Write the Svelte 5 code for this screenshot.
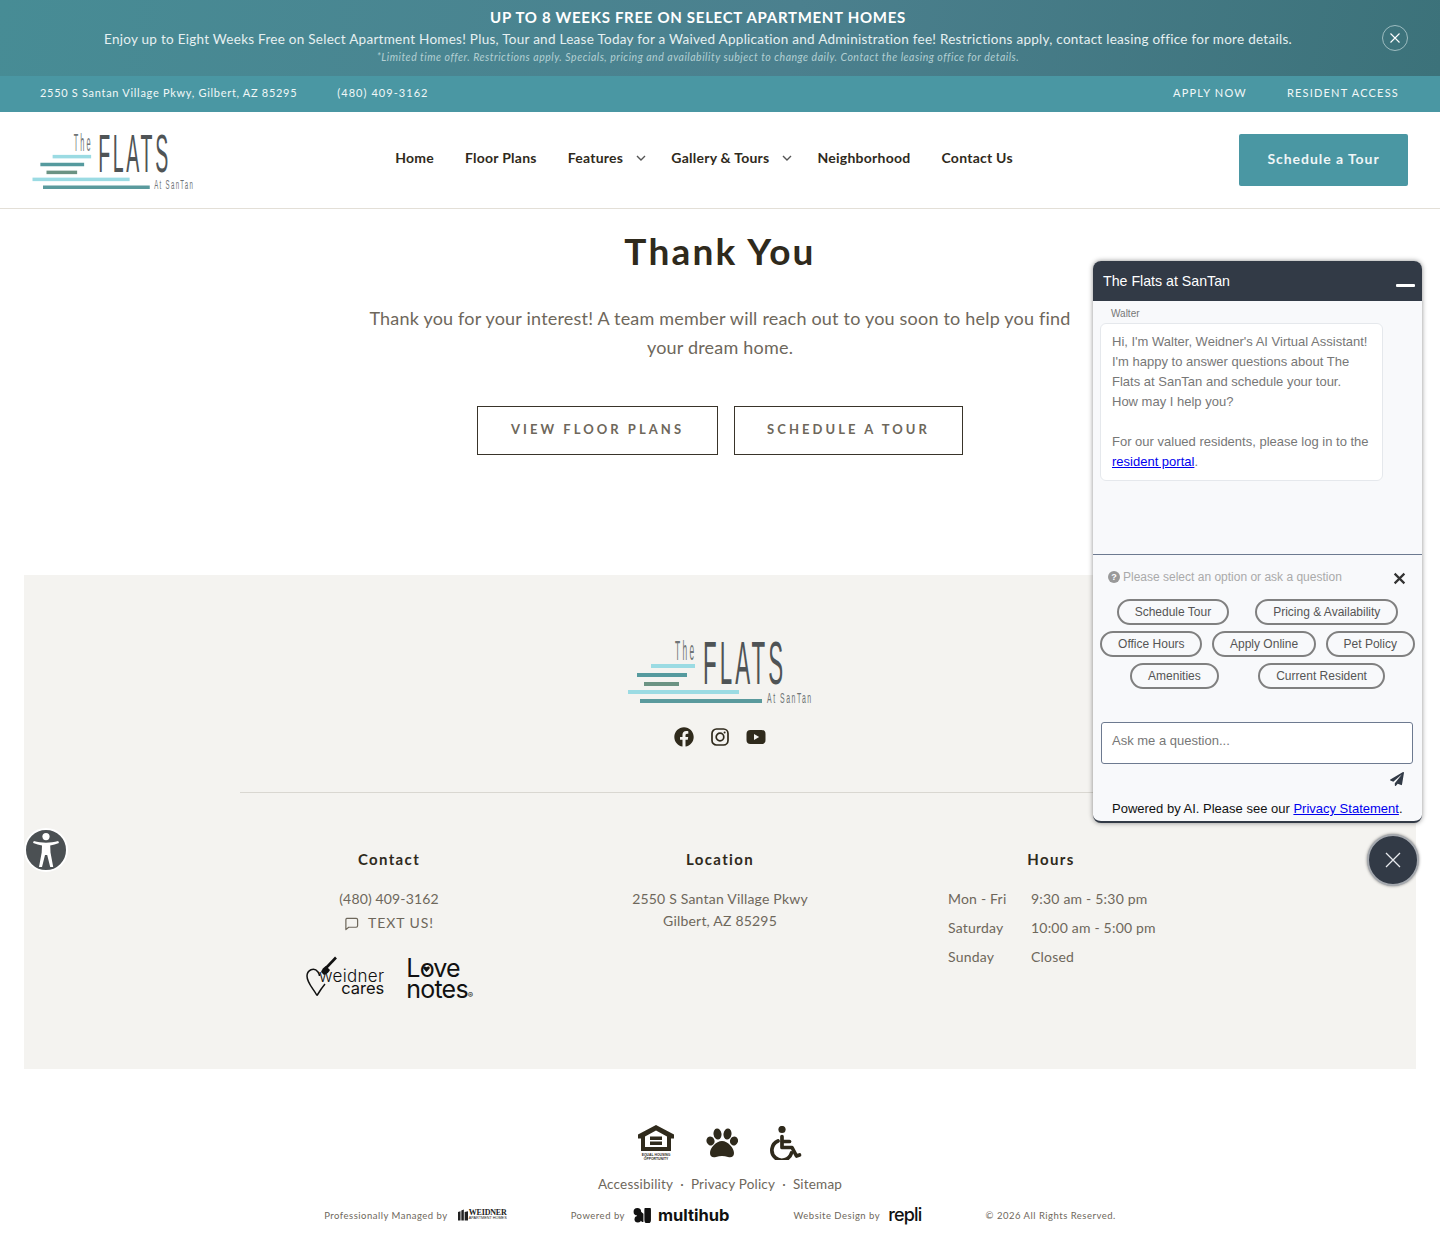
<script>
	const nav = [
		{ label: 'Home' },
		{ label: 'Floor Plans' },
		{ label: 'Features', more: true },
		{ label: 'Gallery & Tours', more: true },
		{ label: 'Neighborhood' },
		{ label: 'Contact Us' }
	];
	const hours = [
		['Mon - Fri', '9:30 am - 5:30 pm'],
		['Saturday', '10:00 am - 5:00 pm'],
		['Sunday', 'Closed']
	];
	const chips = ['Schedule Tour', 'Pricing & Availability', 'Office Hours', 'Apply Online', 'Pet Policy', 'Amenities', 'Current Resident'];
</script>

{#snippet logo(cls)}
	<svg class={cls} viewBox="0 0 184 64" aria-label="The Flats at SanTan">
		<rect x="23" y="25" width="44" height="4" fill="#9bdbe3" />
		<rect x="9" y="34" width="50" height="4" fill="#559a9e" />
		<rect x="16" y="43" width="35" height="4" fill="#6b9383" />
		<rect x="0" y="51" width="111" height="4" fill="#9bdbe3" />
		<rect x="12" y="60" width="122" height="4" fill="#5a9a9d" />
		<g font-family="Liberation Sans" fill="#4f5456">
			<text transform="translate(47 21) scale(.3 1)" font-size="28" letter-spacing="8" fill="#6f7476">The</text>
			<text transform="translate(75 45) scale(.36 1)" font-size="62" letter-spacing="8.500">FLATS</text>
			<text transform="translate(139 64) scale(.45 1)" font-size="15.400" letter-spacing="3.400" fill="#6f7476">At SanTan</text>
		</g>
	</svg>
{/snippet}

<div class="page">
	<section class="promo">
		<h2>UP TO 8 WEEKS FREE ON SELECT APARTMENT HOMES</h2>
		<p class="promo-body">Enjoy up to Eight Weeks Free on Select Apartment Homes! Plus, Tour and Lease Today for a Waived Application and Administration fee! Restrictions apply, contact leasing office for more details.</p>
		<p class="promo-fine">*Limited time offer. Restrictions apply. Specials, pricing and availability subject to change daily. Contact the leasing office for details.</p>
		<button class="promo-close" aria-label="Close">
			<svg viewBox="0 0 12 12" width="12" height="12"><path d="M1.500 1.500l9 9M10.500 1.500l-9 9" stroke="#fff" stroke-width="1.100" fill="none" /></svg>
		</button>
	</section>

	<div class="topbar">
		<div class="topbar-left">
			<span class="addr">2550 S Santan Village Pkwy, Gilbert, AZ 85295</span>
			<span class="tel">(480) 409-3162</span>
		</div>
		<div class="topbar-right">
			<span>APPLY NOW</span>
			<span>RESIDENT ACCESS</span>
		</div>
	</div>

	<header>
		{@render logo('logo-head')}
		<nav>
			{#each nav as item}
				<span class="nav-item" class:more={item.more}>
					{item.label}
					{#if item.more}
						<svg viewBox="0 0 10 6" width="10" height="6"><path d="M1 1l4 4 4-4" stroke="#555" stroke-width="1.400" fill="none" /></svg>
					{/if}
				</span>
			{/each}
		</nav>
		<button class="cta">Schedule a Tour</button>
	</header>

	<main>
		<h1>Thank You</h1>
		<p class="lead">Thank you for your interest! A team member will reach out to you soon to help you find your dream home.</p>
		<div class="actions">
			<button class="ghost wide">VIEW FLOOR PLANS</button>
			<button class="ghost">SCHEDULE A TOUR</button>
		</div>
	</main>

	<footer>
		<div class="foot-top">
			{@render logo('logo-foot')}
			<div class="social">
				<svg viewBox="0 0 512 512" width="20" height="20"><path fill="#2f2a1c" d="M504 256C504 119 393 8 256 8S8 119 8 256c0 123.78 90.69 226.38 209.25 245V327.69h-63V256h63v-54.64c0-62.15 37-96.48 93.67-96.48 27.14 0 55.52 4.84 55.52 4.84v61h-31.28c-30.8 0-40.41 19.12-40.41 38.73V256h68.78l-11 71.69h-57.78V501C413.31 482.38 504 379.78 504 256z" /></svg>
				<svg viewBox="0 0 20 20" width="20" height="20" fill="none" stroke="#2f2a1c" stroke-width="1.700"><rect x="2" y="2" width="16" height="16" rx="4.500" /><circle cx="10" cy="10" r="3.800" /><circle cx="14.600" cy="5.400" r="1" fill="#2f2a1c" stroke="none" /></svg>
				<svg viewBox="0 0 20 20" width="20" height="20"><rect x="0.500" y="3" width="19" height="14" rx="4" fill="#2f2a1c" /><path d="M8 7l5.200 3L8 13z" fill="#f4f3f0" /></svg>
			</div>
		</div>
		<div class="foot-cols">
			<div class="col">
				<h3>Contact</h3>
				<p class="phone">(480) 409-3162</p>
				<p class="text-us">
					<svg viewBox="0 0 16 16" width="15" height="15" fill="none" stroke="#6e675b" stroke-width="1.300"><path d="M3 2.500h10a1.500 1.500 0 0 1 1.500 1.500v6.500A1.500 1.500 0 0 1 13 12H5l-3 2.500V4A1.500 1.500 0 0 1 3 2.500z" stroke-linejoin="round" /></svg>
					<span>TEXT US!</span>
				</p>
				<div class="partners">
					<div class="cares">
						<svg viewBox="0 0 32 40" width="32" height="40" fill="none" stroke="#111" stroke-width="1.500">
							<path d="M11 39.500C7 32 1 27 1 20c0-6 7-9.500 11-4 1 1.500 1.500 3 1.500 4" />
							<path d="M11 39.500c3-5 5-8 8-11.500" />
							<path d="M20 12L30 1.500" stroke-width="2.600" />
							<path d="M15 16c1-3 3-5 5-6l4 4c-1 2-3 4-6 5z" fill="#111" stroke="none" />
						</svg>
						<span class="cares-text"><span>weidner</span><span class="cares-b">cares</span></span>
					</div>
					<div class="love">
						<span class="love-top">Love<svg viewBox="0 0 10 9" width="7" height="6"><path d="M5 9L.6 4.300C-1 2 1.500-.8 5 2c3.500-2.800 6 0 4.400 2.300z" fill="#111" /></svg></span>
						<span>notes<i>®</i></span>
					</div>
				</div>
			</div>
			<div class="col">
				<h3>Location</h3>
				<p class="loc">2550 S Santan Village Pkwy<br />Gilbert, AZ 85295</p>
			</div>
			<div class="col">
				<h3>Hours</h3>
				<div class="hours">
					{#each hours as row}
						<span>{row[0]}</span><span>{row[1]}</span>
					{/each}
				</div>
			</div>
		</div>
	</footer>

	<section class="legal">
		<div class="legal-icons">
			<svg viewBox="0 0 36 36" width="36" height="36">
				<path fill="#2f2a1c" fill-rule="evenodd" d="M18 0L0 9.500v4h3V26h30V13.500h3v-4zM7 11.500l11-6 11 6V22H7z" />
				<rect x="12" y="11.500" width="12" height="3.500" fill="#2f2a1c" />
				<rect x="12" y="16.500" width="12" height="3.500" fill="#2f2a1c" />
				<text x="18" y="30.500" class="eho">EQUAL HOUSING</text>
				<text x="18" y="34.500" class="eho">OPPORTUNITY</text>
			</svg>
			<svg viewBox="0 0 32 30" width="32" height="30" fill="#2f2a1c">
				<ellipse cx="4.500" cy="13" rx="4" ry="4.500" transform="rotate(-20 4.500 13)" />
				<ellipse cx="11.500" cy="6" rx="4" ry="5.500" transform="rotate(-8 11.500 6)" />
				<ellipse cx="21.500" cy="6" rx="4" ry="5.500" transform="rotate(8 21.500 6)" />
				<ellipse cx="28" cy="13" rx="4" ry="4.500" transform="rotate(20 28 13)" />
				<path d="M16 13c6 0 12 7 12 12 0 4-3 5-6 4-2-.6-4-1-6-1s-4 .4-6 1c-3 1-6 0-6-4 0-5 6-12 12-12z" />
			</svg>
			<svg viewBox="0 0 32 34" width="32" height="34" fill="none" stroke="#2f2a1c" stroke-width="3.700" stroke-linecap="round" stroke-linejoin="round">
				<circle cx="12" cy="3.500" r="3.600" fill="#2f2a1c" stroke="none" />
				<path d="M12 10.500v11h10l4.500 8.500 3-1" />
				<path d="M12.500 15.500h7" />
				<path d="M8 15a10 10 0 1 0 13.500 12" />
			</svg>
		</div>
		<div class="legal-links">
			<span>Accessibility</span><i>·</i><span>Privacy Policy</span><i>·</i><span>Sitemap</span>
		</div>
		<div class="credits">
			<div class="credit">
				<span>Professionally Managed by</span>
				<span class="weidner">
					<svg viewBox="0 0 12 13" width="10" height="12" fill="#222"><path d="M0 3l3-1v11H0zM4 1l3-1v13H4zM8 3l4-1v11H8z" /></svg>
					<span class="weidner-text"><b>WEIDNER</b><small>APARTMENT HOMES</small></span>
				</span>
			</div>
			<div class="credit">
				<span>Powered by</span>
				<span class="multihub">
					<svg viewBox="0 0 20 16" width="19" height="15" fill="#111"><circle cx="4.500" cy="4" r="4" /><circle cx="5" cy="12" r="3.500" /><path d="M5 1l6 5v9h-1.500L4 9zM12 2a3 3 0 0 1 7 0v11a3 3 0 0 1-7 0z" /></svg>
					<b>multihub</b>
				</span>
			</div>
			<div class="credit">
				<span>Website Design by</span>
				<span class="repli">repli</span>
			</div>
			<div class="credit"><span>© 2026 All Rights Reserved.</span></div>
		</div>
	</section>

	<aside class="chat">
		<div class="chat-head">
			<span>The Flats at SanTan</span>
			<i class="minimize"></i>
		</div>
		<div class="chat-log">
			<div class="chat-name">Walter</div>
			<div class="bubble">
				Hi, I'm Walter, Weidner's AI Virtual Assistant! I'm happy to answer questions about The Flats at SanTan and schedule your tour.<br />How may I help you?<br /><br />
				For our valued residents, please log in to the <a href="#portal">resident portal</a>.
			</div>
		</div>
		<div class="chat-options">
			<div class="hint">
				<span class="q">?</span>
				<span>Please select an option or ask a question</span>
				<svg viewBox="0 0 12 12" width="13" height="13"><path d="M1.500 1.500l9 9M10.500 1.500l-9 9" stroke="#333" stroke-width="2" fill="none" /></svg>
			</div>
			<div class="chips">
				{#each chips as chip}
					<span class="chip">{chip}</span>
				{/each}
			</div>
		</div>
		<div class="chat-input">Ask me a question...</div>
		<div class="chat-send">
			<svg viewBox="0 0 512 512" width="14" height="14"><path fill="#323a46" d="M476 3.200L12.500 270.600c-18.100 10.400-15.800 35.600 2.200 43.200L121 358.400l287.300-253.200c5.500-4.900 13.300 2.600 8.600 8.300L176 407v80.500c0 23.600 28.500 32.900 42.500 15.800L282 426l124.600 52.200c14.200 6 30.400-2.900 33-18.200l72-432C515 7.800 493.300-6.800 476 3.200z" /></svg>
		</div>
		<div class="chat-foot">Powered by AI. Please see our <a href="#privacy">Privacy Statement</a>.</div>
	</aside>

	<button class="chat-toggle" aria-label="Close chat">
		<svg viewBox="0 0 16 16" width="16" height="16"><path d="M1 1l14 14M15 1L1 15" stroke="#e8eaee" stroke-width="1.300" fill="none" /></svg>
	</button>

	<button class="a11y" aria-label="Accessibility">
		<svg viewBox="0 0 26 34" width="26" height="34" fill="#fff">
			<circle cx="13" cy="3.600" r="3.600" />
			<path d="M0 10l.8-2c4 1.200 8 1.700 12.200 1.700s8.200-.5 12.200-1.700l.8 2c-3 1.200-6 2-8.800 2.400l.3 7 2.700 14.600h-3l-3-12h-2.200l-3 12h-3l2.700-14.600.3-7c-2.800-.4-5.800-1.200-8.800-2.400z" />
		</svg>
	</button>
</div>

<style>
	:global(body) {
		font-family: Lato, "Liberation Sans", sans-serif;
		color: #6e675b;
	}
	.page {
		position: relative;
		height: 1247px;
		overflow: hidden;
		background: #fff;
	}
	button {
		font-family: inherit;
		cursor: pointer;
	}
	p, h1, h2, h3 {
		margin: 0;
	}

	.promo {
		position: relative;
		height: 76px;
		box-sizing: border-box;
		padding: 8px 44px 0 0;
		text-align: center;
		color: #fff;
		background: linear-gradient(100deg, #478c95 0%, #4b808e 55%, #3c727a 100%);
	}
	.promo h2 {
		font-size: 15px;
		line-height: 18px;
		font-weight: 700;
		letter-spacing: 0.7px;
	}
	.promo-body {
		margin-top: 4px;
		font-size: 13.500px;
		line-height: 18px;
		letter-spacing: 0.27px;
		color: #e6f0f1;
	}
	.promo-fine {
		font-size: 10.500px;
		line-height: 14px;
		margin-top: 2px;
		font-style: italic;
		letter-spacing: 0.52px;
		color: #b4d0d3;
	}
	.promo-close {
		position: absolute;
		right: 32px;
		top: 25px;
		width: 26px;
		height: 26px;
		border-radius: 50%;
		border: 1px solid #9dbcc0;
		background: none;
		padding: 0;
		display: flex;
		align-items: center;
		justify-content: center;
	}

	.topbar {
		height: 36px;
		box-sizing: border-box;
		background: #4a97a3;
		display: flex;
		align-items: center;
		justify-content: space-between;
		padding: 0 41px 3px 40px;
		font-size: 11px;
		letter-spacing: 0.7px;
		color: #f1f7f8;
	}
	.topbar-left {
		display: flex;
		gap: 40px;
	}
	.tel {
		letter-spacing: 1.050px;
	}
	.topbar-right {
		display: flex;
		gap: 40px;
		letter-spacing: 1.200px;
	}

	header {
		height: 97px;
		box-sizing: border-box;
		border-bottom: 1px solid #e3dfd7;
		display: flex;
		align-items: center;
		justify-content: space-between;
		padding: 0 32px;
	}
	.logo-head {
		width: 162px;
		height: 56px;
		margin-top: 1px;
		overflow: visible;
	}
	.logo-foot {
		width: 184px;
		height: 64px;
		overflow: visible;
	}
	nav {
		display: flex;
		gap: 31px;
		margin: 0 25px 5px 0;
		font-size: 14px;
		font-weight: 700;
		letter-spacing: 0.25px;
		color: #2f2a1c;
	}
	.nav-item {
		display: flex;
		align-items: center;
		gap: 13px;
		white-space: nowrap;
	}
	.nav-item.more {
		margin-right: -6px;
	}
	.cta {
		width: 169px;
		height: 52px;
		border: 0;
		border-radius: 2px;
		padding-bottom: 4px;
		background: #4a97a3;
		color: #f0f6f7;
		font-size: 14px;
		font-weight: 700;
		letter-spacing: 0.950px;
	}

	main {
		height: 366px;
		box-sizing: border-box;
		padding-top: 20px;
		text-align: center;
	}
	h1 {
		font-size: 37px;
		line-height: 44px;
		font-weight: 700;
		letter-spacing: 2.200px;
		color: #2f2a1c;
	}
	.lead {
		width: 720px;
		margin: 31px auto 0;
		font-size: 18px;
		line-height: 29px;
		letter-spacing: 0.2px;
	}
	.actions {
		margin-top: 44px;
		display: flex;
		justify-content: center;
		gap: 16px;
	}
	.ghost {
		width: 229px;
		height: 49px;
		padding-bottom: 4px;
		background: #fff;
		border: 1px solid #39342a;
		font-size: 13px;
		letter-spacing: 3.050px;
		font-weight: 700;
		color: #6e675b;
	}
	.ghost.wide {
		width: 241px;
	}

	footer {
		margin: 0 24px;
		height: 494px;
		box-sizing: border-box;
		padding-top: 64px;
		background: #f4f3f0;
	}
	.foot-top {
		width: 960px;
		height: 154px;
		margin: 0 auto;
		box-sizing: border-box;
		border-bottom: 1px solid #d9d7d1;
		display: flex;
		flex-direction: column;
		align-items: center;
	}
	.social {
		display: flex;
		gap: 16px;
		margin-top: 24px;
	}
	.foot-cols {
		width: 960px;
		margin: 0 auto;
		padding-top: 57px;
		display: grid;
		grid-template-columns: repeat(3, 298px);
		column-gap: 33px;
		text-align: center;
		font-size: 14px;
		letter-spacing: 0.2px;
	}
	h3 {
		font-size: 15px;
		line-height: 18px;
		font-weight: 700;
		letter-spacing: 1.350px;
		color: #2f2a1c;
	}
	.phone {
		margin-top: 21px;
		line-height: 20px;
		letter-spacing: 0.15px;
	}
	.text-us {
		margin-top: 4px;
		display: flex;
		align-items: center;
		justify-content: center;
		gap: 9px;
		line-height: 20px;
		letter-spacing: 0.950px;
	}
	.loc {
		margin-top: 20px;
		line-height: 22px;
	}
	.partners {
		margin-top: 23px;
		display: flex;
		justify-content: center;
		align-items: flex-start;
		gap: 22px;
		color: #111;
		font-family: Inter, sans-serif;
		letter-spacing: 0;
	}
	.cares {
		display: flex;
		align-items: flex-start;
	}
	.cares-text {
		display: flex;
		flex-direction: column;
		align-items: flex-end;
		margin-left: -19px;
		margin-top: 14px;
		font-size: 17px;
		line-height: 12px;
		font-weight: 300;
		letter-spacing: 0.3px;
	}
	.cares-b {
		font-size: 16.500px;
		font-weight: 400;
		letter-spacing: 0;
	}
	.love {
		display: flex;
		flex-direction: column;
		text-align: left;
		font-size: 25px;
		line-height: 21px;
		letter-spacing: -0.8px;
		padding-top: 2px;
	}
	.love-top {
		position: relative;
	}
	.love-top svg {
		position: absolute;
		left: 17px;
		top: 8px;
	}
	.love i {
		font-size: 8px;
		font-style: normal;
	}
	.hours {
		margin: 21px 0 0 46px;
		display: grid;
		grid-template-columns: 83px 1fr;
		row-gap: 9px;
		line-height: 20px;
		text-align: left;
	}

	.legal {
		padding-top: 56px;
		text-align: center;
	}
	.legal-icons {
		display: flex;
		justify-content: center;
		align-items: center;
		gap: 32px;
		height: 36px;
	}
	.eho {
		font-family: "Liberation Sans", sans-serif;
		font-size: 3.400px;
		font-weight: 700;
		text-anchor: middle;
		fill: #2f2a1c;
	}
	.legal-links {
		margin-top: 14px;
		display: flex;
		justify-content: center;
		gap: 7px;
		font-size: 13.500px;
		line-height: 18px;
		letter-spacing: 0.2px;
	}
	.legal-links i {
		font-style: normal;
	}
	.credits {
		margin-top: 11px;
		display: flex;
		justify-content: center;
		gap: 64px;
		font-size: 9.500px;
		letter-spacing: 0.5px;
	}
	.credit {
		display: flex;
		align-items: center;
		gap: 8px;
		height: 22px;
	}
	.weidner {
		display: flex;
		align-items: center;
		gap: 1px;
		margin-left: 2px;
		color: #222;
	}
	.weidner-text {
		display: flex;
		flex-direction: column;
		font-family: "Liberation Serif", serif;
		letter-spacing: 0;
		line-height: 7px;
	}
	.weidner-text b {
		font-size: 8px;
		letter-spacing: -0.2px;
	}
	.weidner-text small {
		font-family: "Liberation Sans", sans-serif;
		font-size: 3.800px;
		line-height: 5px;
	}
	.multihub {
		display: flex;
		align-items: center;
		gap: 6px;
		font-family: Inter, sans-serif;
		font-size: 16.500px;
		letter-spacing: 0;
		color: #111;
	}
	.repli {
		font-family: Inter, sans-serif;
		font-size: 18px;
		font-weight: 500;
		line-height: 20px;
		letter-spacing: -0.8px;
		color: #111;
	}

	.chat {
		position: absolute;
		left: 1093px;
		top: 261px;
		width: 329px;
		height: 562px;
		box-sizing: border-box;
		border-bottom: 2px solid #323a46;
		border-radius: 8px;
		background: #f8f9fb;
		box-shadow: 0 0 5px rgba(0, 0, 0, 0.45);
		font-family: "Liberation Sans", sans-serif;
		font-size: 13px;
		color: #777;
		overflow: hidden;
	}
	.chat-head {
		height: 40px;
		background: #323a46;
		color: #fff;
		font-size: 14.200px;
		line-height: 40px;
		padding-left: 10px;
		position: relative;
	}
	.minimize {
		position: absolute;
		right: 7px;
		top: 23px;
		width: 19px;
		height: 3px;
		background: #fff;
		border-radius: 1px;
	}
	.chat-log {
		height: 254px;
		box-sizing: border-box;
		border-bottom: 1px solid #6d7a90;
		padding: 7px 7px 0;
	}
	.chat-name {
		font-size: 10px;
		line-height: 12px;
		padding-left: 11px;
		margin-bottom: 3px;
	}
	.bubble {
		width: 283px;
		box-sizing: border-box;
		padding: 8px 11px;
		background: #fff;
		border: 1px solid #e5e8ec;
		border-radius: 6px;
		line-height: 20px;
	}
	.chat-options {
		height: 167px;
		box-sizing: border-box;
		padding-top: 15px;
	}
	.hint {
		display: flex;
		align-items: center;
		height: 14px;
		padding-left: 15px;
		font-size: 12px;
		color: #aaa;
		gap: 3px;
	}
	.hint svg {
		margin-left: auto;
		margin-right: 16px;
		margin-top: 2px;
	}
	.q {
		width: 12px;
		height: 12px;
		border-radius: 50%;
		background: #999;
		color: #fff;
		font-size: 9px;
		font-weight: 700;
		line-height: 12px;
		text-align: center;
	}
	.chips {
		margin-top: 15px;
		display: flex;
		flex-wrap: wrap;
		justify-content: space-evenly;
		row-gap: 8px;
	}
	.chip {
		margin: 0 2.500px -2px;
		box-sizing: border-box;
		height: 26px;
		padding: 0 15.900px;
		border: 2px solid #808080;
		border-radius: 13px;
		font-size: 12px;
		line-height: 22px;
		color: #555;
		white-space: nowrap;
	}
	.chat-input {
		margin: 0 9px 0 8px;
		height: 42px;
		box-sizing: border-box;
		padding: 10px;
		background: #fff;
		border: 1px solid #6d7a90;
		border-radius: 3px;
		color: #777;
	}
	.chat-send {
		height: 35px;
		padding: 8px 18px 0 0;
		box-sizing: border-box;
		display: flex;
		justify-content: flex-end;
	}
	.chat-foot {
		padding-left: 19px;
		line-height: 20px;
		color: #111;
	}
	.chat-toggle {
		position: absolute;
		left: 1367px;
		top: 834px;
		width: 52px;
		height: 52px;
		box-sizing: border-box;
		padding: 0;
		border-radius: 50%;
		border: 2px solid #a5a9af;
		background: #323a46;
		box-shadow: 0 0 3px rgba(0, 0, 0, 0.5);
		display: flex;
		align-items: center;
		justify-content: center;
	}
	.a11y {
		position: absolute;
		left: 24px;
		top: 828px;
		width: 44px;
		height: 44px;
		box-sizing: border-box;
		padding: 0;
		border-radius: 50%;
		border: 2px solid #fff;
		background: #4b5053;
		display: flex;
		align-items: center;
		justify-content: center;
	}
</style>
